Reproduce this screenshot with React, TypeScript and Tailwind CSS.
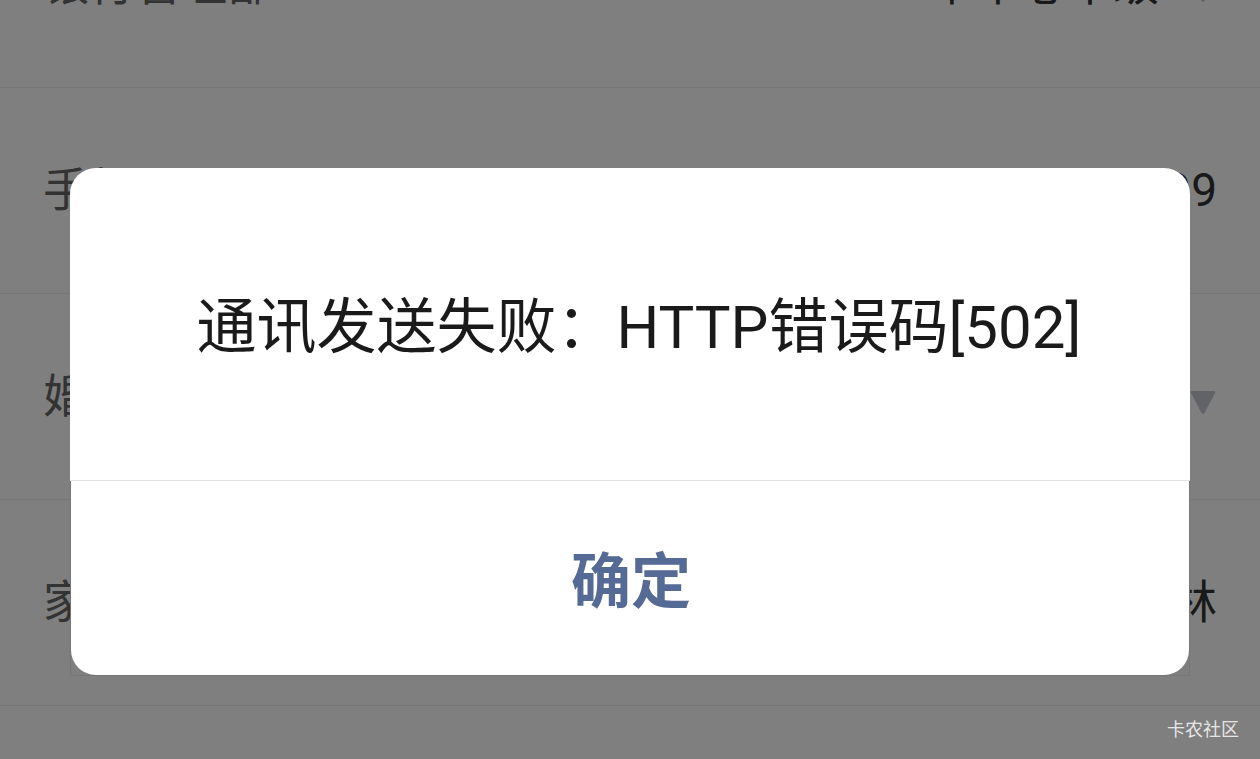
import React from 'react';

const font = { fontFamily: 'Roboto, "Noto Sans CJK SC", sans-serif' };

type Row = { label: string; value: string; arrow?: boolean };

const rows: Row[] = [
  { label: '银行管理部', value: '市中心本级', arrow: true },
  { label: '手机号码', value: '138****6699' },
  { label: '婚姻状况', value: '已婚', arrow: true },
  { label: '家庭住址', value: '吉林省长春市吉林' },
];

const Caret: React.FC = () => (
  <svg width="28" height="28" viewBox="0 0 28 28" className="ml-[30px] mt-[10px] shrink-0">
    <path d="M3 3 L25 3 Q27 3 26 5 L15.5 25 Q14 27 12.5 25 L2 5 Q1 3 3 3 Z" fill="#c4c6d0" />
  </svg>
);

const App: React.FC = () => {
  return (
    <div className="relative w-[1260px] h-[759px] overflow-hidden bg-white" style={font}>
      {/* page behind the dialog */}
      <div className="-mt-[118px]">
        {rows.map((r) => (
          <div key={r.label} className="flex items-center justify-between h-[206px] pl-[43px] pr-[43px] border-b border-[#eeeeee]">
            <span className="text-[46px] text-[#666666]">{r.label}</span>
            <div className="flex items-center">
              <span className="text-[46px] text-[#333333]">{r.value}</span>
              {r.arrow && <Caret />}
            </div>
          </div>
        ))}
      </div>

      {/* dim overlay + dialog */}
      <div className="absolute inset-0 bg-black/50 flex justify-center pt-[168px]">
        <div className="w-[1120px] h-fit">
          <div className="h-[312px] bg-white rounded-t-[26px] flex items-center justify-center pt-[8px] pl-[18px]">
            <p className="text-[60px] text-[#1a1a1a] leading-none">通讯发送失败：HTTP错误码[502]</p>
          </div>
          <div className="h-px bg-[#e2e2e2]" />
          <div className="border-x border-b border-[#767676]">
            <button className="w-full h-[194px] bg-white rounded-b-[25px] flex items-center justify-center pt-[10px] pl-[2px]">
              <span className="text-[60px] font-bold text-[#566a96] leading-none">确定</span>
            </button>
          </div>
        </div>
      </div>

      {/* watermark */}
      <div className="absolute right-[21px] bottom-[20px] text-[18px] text-[#e6e6e6] leading-none">卡农社区</div>
    </div>
  );
};

export default App;
